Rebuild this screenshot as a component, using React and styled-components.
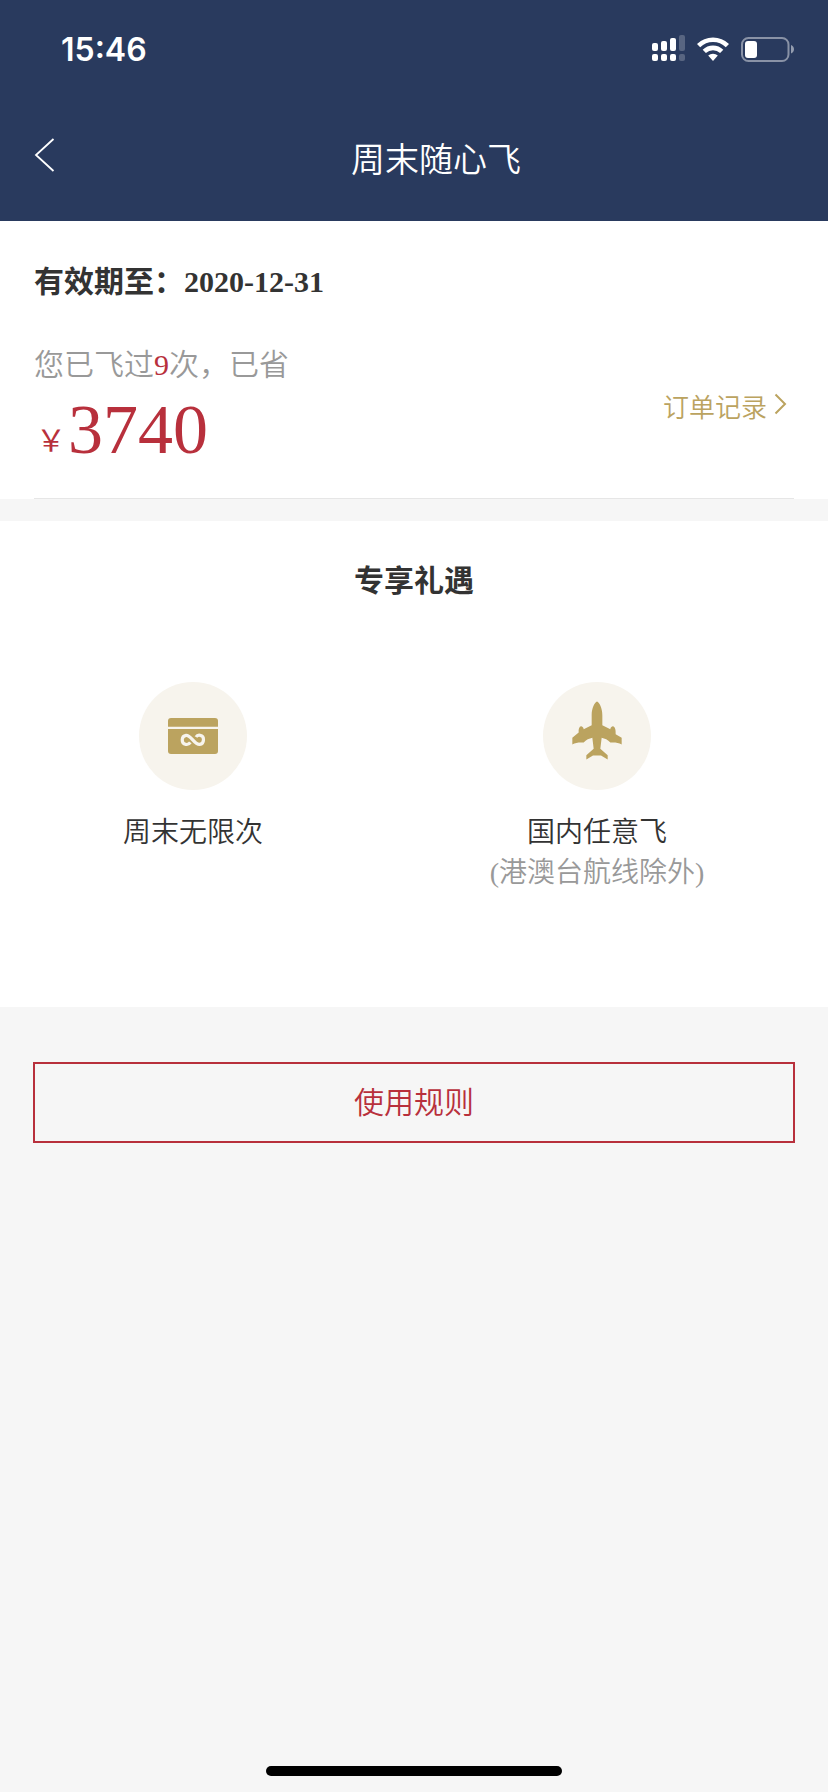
// Weekend pass page: validity + savings summary, benefits list and a link to the rules

import React from "react";
import styled, { createGlobalStyle } from "styled-components";

const GlobalStyle = createGlobalStyle`
  * {
    box-sizing: border-box;
  }

  body {
    margin: 0;
    background: #f6f6f6;
    font-family: "Liberation Serif", "Noto Sans CJK SC", serif;
    font-weight: 350;
    color: #333;
  }
`;

const Page = styled.div`
  display: flex;
  flex-direction: column;
  width: 828px;
  height: 1792px;
  background: #f6f6f6;
`;

const Header = styled.header`
  height: 221px;
  background: #293a5e;
  color: #fff;
`;

const StatusBar = styled.div`
  display: flex;
  justify-content: space-between;
  height: 98px;
  padding: 30px 33px 0 61px;
`;

const Time = styled.span`
  font-family: Inter, sans-serif;
  font-size: 32px;
  font-weight: 600;
  line-height: 40px;
`;

const StatusIcons = styled.div`
  display: flex;
  gap: 12px;
  padding-top: 5px;
`;

const NavBar = styled.div`
  display: grid;
  grid-template-columns: 100px 1fr 100px;
  height: 123px;
`;

const BackButton = styled.button`
  display: flex;
  align-items: flex-start;
  padding: 40px 0 0 34px;
  border: 0;
  background: none;
  color: inherit;
`;

const NavTitle = styled.h1`
  margin: 0;
  padding: 38px 0 0 44px;
  font-size: 34px;
  font-weight: 350;
  line-height: 50px;
  text-align: center;
`;

const Summary = styled.section`
  height: 278px;
  padding: 0 34px;
  background: #fff;
`;

const SummaryInner = styled.div`
  height: 278px;
  padding-top: 39px;
  border-bottom: 1px solid #e6e6e6;
`;

const Validity = styled.p`
  margin: 0;
  font-size: 30px;
  font-weight: bold;
  line-height: 44px;
`;

const SavingsRow = styled.div`
  display: flex;
  justify-content: space-between;
  margin-top: 39px;
`;

const FlownText = styled.p`
  margin: 0;
  color: #999;
  font-size: 30px;
  line-height: 44px;
`;

const Count = styled.span`
  color: #b8303c;
`;

const Amount = styled.div`
  margin-top: 3px;
  color: #b8303c;
  font-size: 70px;
  line-height: 80px;
`;

const Currency = styled.span`
  padding: 0 2px;
  font-size: 30px;
  font-weight: normal;
  line-height: 1;
  vertical-align: 2px;
`;

const OrdersLink = styled.a`
  display: flex;
  align-items: flex-start;
  gap: 7px;
  padding: 48px 7px 0 0;
  color: #bba35f;
  font-size: 26px;
  line-height: 36px;
`;

const Chevron = styled.svg`
  margin-top: 2px;
`;

const Benefits = styled.section`
  height: 486px;
  margin-top: 22px;
  padding-top: 38px;
  background: #fff;
`;

const SectionTitle = styled.h2`
  margin: 0;
  font-size: 30px;
  font-weight: bold;
  line-height: 44px;
  text-align: center;
`;

const BenefitList = styled.div`
  display: grid;
  grid-template-columns: 386px 422px;
  margin-top: 79px;
`;

const Benefit = styled.div`
  display: flex;
  flex-direction: column;
  align-items: center;
  font-size: 28px;
  line-height: 40px;
`;

const IconCircle = styled.div`
  display: flex;
  align-items: center;
  justify-content: center;
  width: 108px;
  height: 108px;
  margin-bottom: 23px;
  border-radius: 50%;
  background: #f7f4ed;
`;

const PlaneCircle = styled(IconCircle)`
  padding-bottom: 11px;
`;

const BenefitNote = styled.span`
  color: #999;
`;

const RulesButton = styled.button`
  height: 81px;
  margin: 55px 33px 0;
  padding: 0 0 6px;
  border: 2px solid #b8303c;
  background: none;
  color: #b8303c;
  font-family: inherit;
  font-size: 30px;
  font-weight: 350;
`;

const HomeIndicator = styled.div`
  width: 296px;
  height: 10px;
  margin: auto auto 16px;
  border-radius: 5px;
  background: #000;
`;

// dual sim signal, the last column is out of reach
const SignalIcon = () => (
  <svg width="33" height="26" viewBox="0 0 33 26" fill="#fff">
    <rect x="0" y="8" width="6" height="8" rx="2" />
    <rect x="9" y="6" width="6" height="10" rx="2" />
    <rect x="18" y="3" width="6" height="13" rx="2" />
    <rect x="27" y="0" width="6" height="16" rx="2" opacity="0.22" />
    <rect x="0" y="19" width="6" height="7" rx="2" />
    <rect x="9" y="19" width="6" height="7" rx="2" />
    <rect x="18" y="19" width="6" height="7" rx="2" />
    <rect x="27" y="19" width="6" height="7" rx="2" opacity="0.22" />
  </svg>
);

const WifiIcon = () => (
  <svg width="32" height="27" viewBox="0 0 32 27">
    <g fill="none" stroke="#fff" strokeWidth="4.6">
      <path d="M1.6 10.6 A20.5 20.5 0 0 1 30.4 10.6" />
      <path d="M7.3 16.4 A12.4 12.4 0 0 1 24.7 16.4" />
    </g>
    <path d="M11.2 20.6 A7 7 0 0 1 20.8 20.6 L16 26 Z" fill="#fff" />
  </svg>
);

const BatteryIcon = () => (
  <svg width="54" height="28" viewBox="0 0 54 28">
    <rect x="1" y="3" width="46.5" height="23" rx="6.5" fill="none" stroke="#fff" strokeOpacity="0.45" strokeWidth="2" />
    <rect x="4" y="6" width="12" height="17" rx="3" fill="#fff" />
    <path d="M50 10 C54 11.5 54 17 50 18.5 Z" fill="#fff" opacity="0.5" />
  </svg>
);

const CardIcon = () => (
  <svg width="50" height="36" viewBox="0 0 150 108">
    <path d="M0 26 V9 Q0 0 9 0 H141 Q150 0 150 9 V26 Z" fill="#bba35f" />
    <path d="M0 33 H150 V99 Q150 108 141 108 H9 Q0 108 0 99 Z" fill="#bba35f" />
    <path
      d="M67 73 C63 79 57 80 53 79 C39 77 39 54 54 52 C69 50 78 80 95 79 C110 77 110 54 97 52 C92 51 87 52 84 57"
      fill="none"
      stroke="#f7f4ed"
      strokeWidth="9.5"
    />
  </svg>
);

const PlaneIcon = () => (
  <svg width="50" height="59" viewBox="306 124 150 176">
    <path
      d="M381 125 C374 127 365 145 365 166 V196 L341 208 C341 203 337 199 333 199 C328 200 325 207 326 218 L307 234 V254 C317 248 328 247 341 248 C348 240 358 236 367 234 L371 267 L349 286 V299 L369 287 H393 L413 299 V286 L391 267 L395 234 C404 236 414 240 421 248 C434 247 445 248 455 254 V234 L437 223 C438 207 434 200 429 199 C425 199 421 203 421 208 L397 196 V166 C397 145 388 127 381 125 Z"
      fill="#bba35f"
    />
  </svg>
);

const App = () => {
  return (
    <>
      <GlobalStyle />
      <Page>
        <Header>
          <StatusBar>
            <Time>15:46</Time>
            <StatusIcons>
              <SignalIcon />
              <WifiIcon />
              <BatteryIcon />
            </StatusIcons>
          </StatusBar>
          <NavBar>
            <BackButton>
              <svg width="21" height="34" viewBox="0 0 21 34" fill="none" stroke="#fff" strokeWidth="1.8">
                <path d="M19.5 1 L2 17 L19.5 33" />
              </svg>
            </BackButton>
            <NavTitle>周末随心飞</NavTitle>
          </NavBar>
        </Header>

        <Summary>
          <SummaryInner>
            <Validity>有效期至：2020-12-31</Validity>
            <SavingsRow>
              <div>
                <FlownText>
                  您已飞过<Count>9</Count>次，已省
                </FlownText>
                <Amount>
                  <Currency>￥</Currency>3740
                </Amount>
              </div>
              <OrdersLink>
                订单记录
                <Chevron width="13" height="22" viewBox="0 0 13 22" fill="none" stroke="#bba35f" strokeWidth="2">
                  <path d="M1.5 1.5 L11 11 L1.5 20.5" />
                </Chevron>
              </OrdersLink>
            </SavingsRow>
          </SummaryInner>
        </Summary>

        <Benefits>
          <SectionTitle>专享礼遇</SectionTitle>
          <BenefitList>
            <Benefit>
              <IconCircle>
                <CardIcon />
              </IconCircle>
              <span>周末无限次</span>
            </Benefit>
            <Benefit>
              <PlaneCircle>
                <PlaneIcon />
              </PlaneCircle>
              <span>国内任意飞</span>
              <BenefitNote>(港澳台航线除外)</BenefitNote>
            </Benefit>
          </BenefitList>
        </Benefits>

        <RulesButton>使用规则</RulesButton>
        <HomeIndicator />
      </Page>
    </>
  );
};

export default App;
